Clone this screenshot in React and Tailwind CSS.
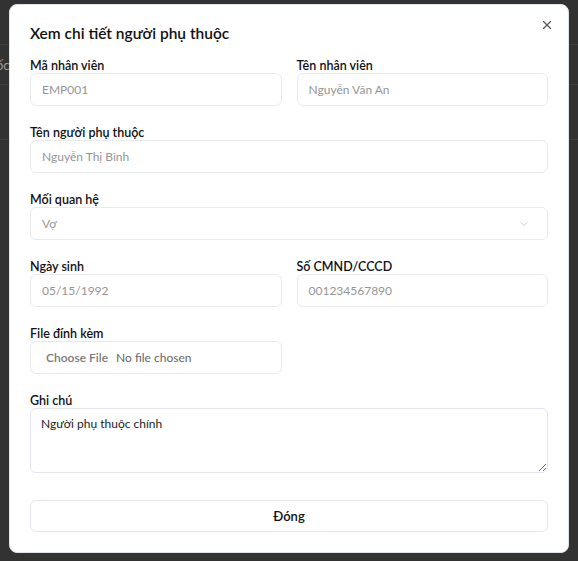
import React from "react";
import { X, ChevronDown } from "lucide-react";

function Field({ label, children, className = "" }) {
  return (
    <div className={"flex flex-col " + className}>
      <div className="h-[18px] leading-[21px] text-[12.5px] font-semibold text-[#111]">{label}</div>
      {children}
    </div>
  );
}

function Box({ children, className = "" }) {
  return (
    <div className={"h-[33px] rounded-md border border-[#e8eaee] bg-white px-[11px] flex items-center text-[12px] text-[#959595] " + className}>
      {children}
    </div>
  );
}

export default function App() {
  return (
    <div className="relative w-[578px] h-[561px] overflow-hidden bg-[#323232]" style={{ fontFamily: "Lato, 'Noto Sans', sans-serif" }}>
      <div className="flex flex-col">
        <div className="h-[45px] border-b border-[#3c3c3c]" />
        <div className="h-[40px] border-b border-[#3c3c3c] flex items-center">
          <span className="text-[13px] text-[#9b9b9b] -ml-[4px] mt-[2px]">ốc</span>
        </div>
        <div className="h-[55px] border-b border-[#3c3c3c]" />
      </div>
      <div className="absolute left-[9px] top-[4px] w-[560px] h-[549px] rounded-lg bg-white border border-[#dfe3ea] px-[20px] pt-[16px] pb-[20px] flex flex-col">
        <button className="absolute right-[14px] top-[13px] text-[#555]">
          <X size={14} strokeWidth={2} />
        </button>
        <h2 className="h-6 leading-6 text-[15.5px] font-semibold text-[#111] mb-[10px]">Xem chi tiết người phụ thuộc</h2>
        <div className="flex flex-col gap-4">
          <div className="grid grid-cols-2 gap-[15px]">
            <Field label="Mã nhân viên"><Box>EMP001</Box></Field>
            <Field label="Tên nhân viên"><Box>Nguyễn Văn An</Box></Field>
          </div>
          <Field label="Tên người phụ thuộc"><Box>Nguyễn Thị Bình</Box></Field>
          <Field label="Mối quan hệ">
            <Box className="justify-between">
              <span>Vợ</span>
              <ChevronDown size={12} strokeWidth={1.5} className="text-[#b5b5b5] mr-[6px]" />
            </Box>
          </Field>
          <div className="grid grid-cols-2 gap-[15px]">
            <Field label="Ngày sinh"><Box>05/15/1992</Box></Field>
            <Field label="Số CMND/CCCD"><Box>001234567890</Box></Field>
          </div>
          <div className="grid grid-cols-2 gap-[15px]">
            <Field label="File đính kèm">
              <Box className="pl-[15px]">
                <span className="font-semibold text-[#7a7a7a] mr-[8px]">Choose File</span>
                <span className="text-[#666]">No file chosen</span>
              </Box>
            </Field>
          </div>
          <Field label="Ghi chú">
            <textarea
              readOnly
              defaultValue="Người phụ thuộc chính"
              className="h-[65px] rounded-md border border-[#e3e6ec] bg-white px-[10px] py-[6px] text-[12px] text-[#222] outline-none resize-y"
            />
          </Field>
        </div>
        <button className="mt-[27px] h-[33px] w-full rounded-md border border-[#e3e6ec] bg-white pt-[2px] text-[13px] font-semibold text-[#111]">
          Đóng
        </button>
      </div>
    </div>
  );
}
